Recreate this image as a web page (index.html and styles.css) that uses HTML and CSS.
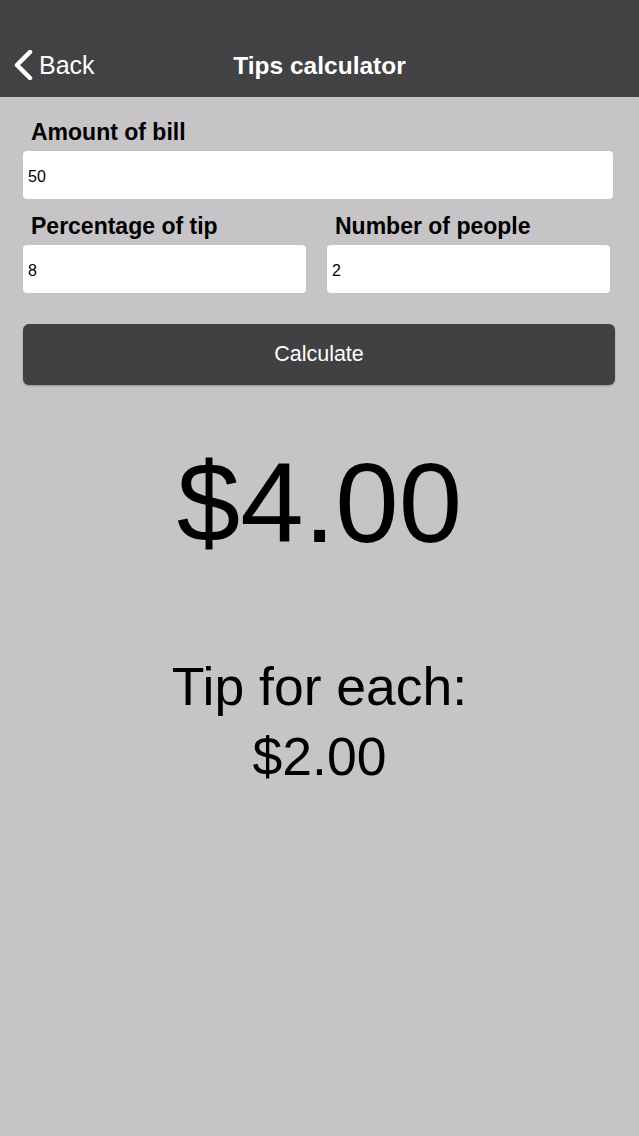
FILE: index.html
```html
<!DOCTYPE html>
<html lang="en">
<head>
    <meta charset="UTF-8">
    <meta name="viewport" content="width=device-width, initial-scale=1.0">
    <title>Tips calculator</title>
    <link rel="stylesheet" href="styles.css">
</head>
<body>

<div class="header">
    <a class="back" href="#">
        <svg class="chevron" width="20" height="30" viewBox="0 0 20 30">
            <path d="M17 2 L4 15 L17 28" fill="none" stroke="#ffffff" stroke-width="4.5" stroke-linecap="round" stroke-linejoin="round"/>
        </svg>
        <span>Back</span>
    </a>
    <h1>Tips calculator</h1>
</div>

<div class="form">
    <label class="field bill">
        <span class="label">Amount of bill</span>
        <input type="text" id="bill" value="50">
    </label>

    <div class="row">
        <label class="field">
            <span class="label">Percentage of tip</span>
            <input type="text" id="percent" value="8">
        </label>
        <label class="field">
            <span class="label">Number of people</span>
            <input type="text" id="people" value="2">
        </label>
    </div>

    <button class="calc" onclick="calcular()">Calculate</button>
</div>

<div class="total" id="total">$4.00</div>
<div class="each">
    Tip for each:<br>
    <span id="each">$2.00</span>
</div>

<script>
    function calcular() {
        const bill = parseFloat(document.getElementById('bill').value) || 0;
        const percent = parseFloat(document.getElementById('percent').value) || 0;
        const people = parseInt(document.getElementById('people').value) || 1;

        const tip = bill * percent / 100;
        document.getElementById('total').innerText = '$' + tip.toFixed(2);
        document.getElementById('each').innerText = '$' + (tip / people).toFixed(2);
    }
</script>

</body>
</html>
```

FILE: styles.css
```css
body {
    font-family: "Liberation Sans", Arial, sans-serif;
    margin: 0;
    background-color: #c6c4c7;
    color: #000;
}
.header {
    position: relative;
    height: 97px;
    background-color: #424144;
    color: white;
}
.header h1 {
    margin: 0;
    padding-top: 51px;
    text-align: center;
    font-size: 24.5px;
    font-weight: bold;
    line-height: 30px;
}
.back {
    position: absolute;
    left: 13px;
    top: 50px;
    display: flex;
    align-items: center;
    gap: 6px;
    color: white;
    text-decoration: none;
    font-size: 25px;
}
.chevron {
    display: block;
}
.form {
    padding: 22px 24px 0 23px;
}
.field {
    display: flex;
    flex-direction: column;
    flex: 1;
}
.bill {
    margin-right: 2px;
}
.label {
    font-size: 23px;
    font-weight: bold;
    padding-left: 8px;
    line-height: 26px;
    margin-bottom: 6px;
}
input[type="text"] {
    height: 48px;
    box-sizing: border-box;
    padding: 4px 5px 0;
    border: none;
    border-radius: 4px;
    background-color: white;
    font-family: inherit;
    font-size: 16px;
    color: #000;
}
.row {
    display: flex;
    gap: 21px;
    margin-top: 14px;
    margin-right: 5px;
}
.calc {
    display: block;
    width: 100%;
    height: 61px;
    margin-top: 31px;
    background-color: #414043;
    color: white;
    border: none;
    border-radius: 6px;
    box-shadow: 0 1px 2px rgba(0, 0, 0, 0.25);
    font-family: inherit;
    font-size: 21.5px;
    cursor: pointer;
}
.total {
    margin-top: 53px;
    text-align: center;
    font-size: 114px;
    line-height: 130px;
}
.each {
    margin-top: 84px;
    text-align: center;
    font-size: 53.5px;
    line-height: 70px;
}
```
